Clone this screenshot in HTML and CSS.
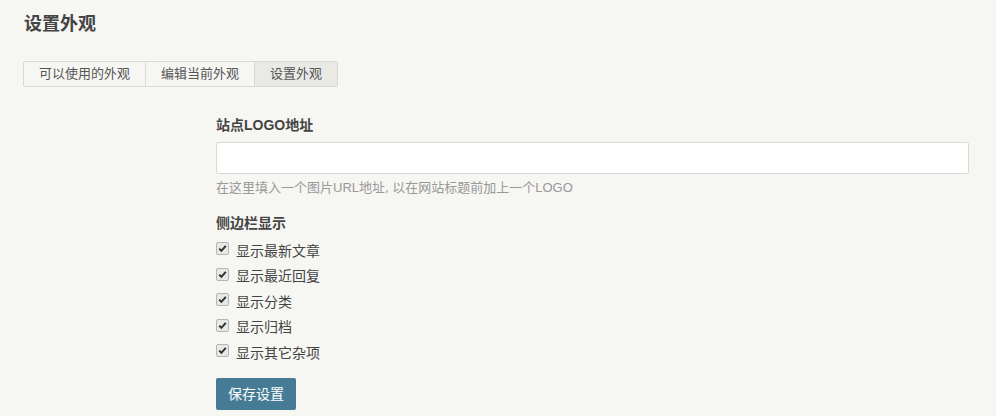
FILE: index.html
```html
<!DOCTYPE html>
<html lang="zh-CN">
<head>
<meta charset="utf-8">
<title>设置外观</title>
<link rel="stylesheet" href="styles.css">
</head>
<body>
<div class="page">
  <h2 class="page-title">设置外观</h2>
  <ul class="tabs">
    <li class="tab">可以使用的外观</li>
    <li class="tab">编辑当前外观</li>
    <li class="tab active">设置外观</li>
  </ul>
  <form class="form">
    <label class="field-label" for="logo">站点LOGO地址</label>
    <input class="text-input" id="logo" type="text">
    <p class="desc">在这里填入一个图片URL地址, 以在网站标题前加上一个LOGO</p>
    <div class="field-label second">侧边栏显示</div>
    <ul class="checks">
      <li class="check"><input type="checkbox" class="cb" checked><span>显示最新文章</span></li>
      <li class="check"><input type="checkbox" class="cb" checked><span>显示最近回复</span></li>
      <li class="check"><input type="checkbox" class="cb" checked><span>显示分类</span></li>
      <li class="check"><input type="checkbox" class="cb" checked><span>显示归档</span></li>
      <li class="check"><input type="checkbox" class="cb" checked><span>显示其它杂项</span></li>
    </ul>
    <button type="button" class="btn">保存设置</button>
  </form>
</div>
</body>
</html>
```
FILE: styles.css
```css
html, body {
  margin: 0;
  padding: 0;
  background: #F6F6F3;
  font-family: "Liberation Sans", "Noto Sans CJK SC", sans-serif;
  color: #444;
}
.page {
  padding: 12px 27px 0 23px;
}
.page-title {
  margin: 0 0 0 1px;
  font-size: 18px;
  line-height: 24px;
  font-weight: bold;
  color: #444;
}
.tabs {
  list-style: none;
  margin: 25px 0 0 0;
  padding: 0;
  display: inline-flex;
  border: 1px solid #D9D9D6;
  border-radius: 2px;
}
.tab {
  padding: 0 15px;
  font-size: 13px;
  line-height: 24px;
  color: #555;
  background: #F6F6F3;
  border-left: 1px solid #D9D9D6;
}
.tab:first-child {
  border-left: none;
}
.tab.active {
  background: #E9E9E6;
}
.form {
  margin: 28px 0 0 193px;
  display: flex;
  flex-direction: column;
  align-items: flex-start;
}
.field-label {
  font-size: 14px;
  line-height: 20px;
  font-weight: bold;
  color: #444;
}
.field-label.second {
  margin-top: 15px;
}
.text-input {
  margin-top: 7px;
  width: 100%;
  height: 32px;
  box-sizing: border-box;
  border: 1px solid #D9D9D6;
  border-radius: 2px;
  background: #FFF;
  outline: none;
}
.desc {
  margin: 4px 0 0 0;
  font-size: 13px;
  line-height: 20px;
  color: #999;
}
.checks {
  list-style: none;
  margin: 4px 0 0 0;
  padding: 0;
}
.check {
  display: flex;
  align-items: center;
  height: 25.5px;
  font-size: 14px;
  color: #444;
}
.cb {
  appearance: none;
  -webkit-appearance: none;
  margin: 0 7px 0 0;
  width: 13px;
  height: 13px;
  box-sizing: border-box;
  border: 1px solid #B5B5B5;
  border-radius: 2px;
  background-color: #E8E8E8;
  background-image: url("data:image/svg+xml;utf8,<svg xmlns='http://www.w3.org/2000/svg' width='11' height='11' viewBox='0 0 11 11'><path d='M2.2 5.6 L4.4 7.8 L8.8 2.8' fill='none' stroke='%23333' stroke-width='2'/></svg>");
  background-repeat: no-repeat;
  background-position: center;
  position: relative;
  top: -1px;
}
.btn {
  margin-top: 13px;
  height: 32px;
  padding: 0 12px;
  border: none;
  border-radius: 2px;
  background: #467B96;
  color: #FFF;
  font-family: inherit;
  font-size: 14px;
  line-height: 32px;
}
```
